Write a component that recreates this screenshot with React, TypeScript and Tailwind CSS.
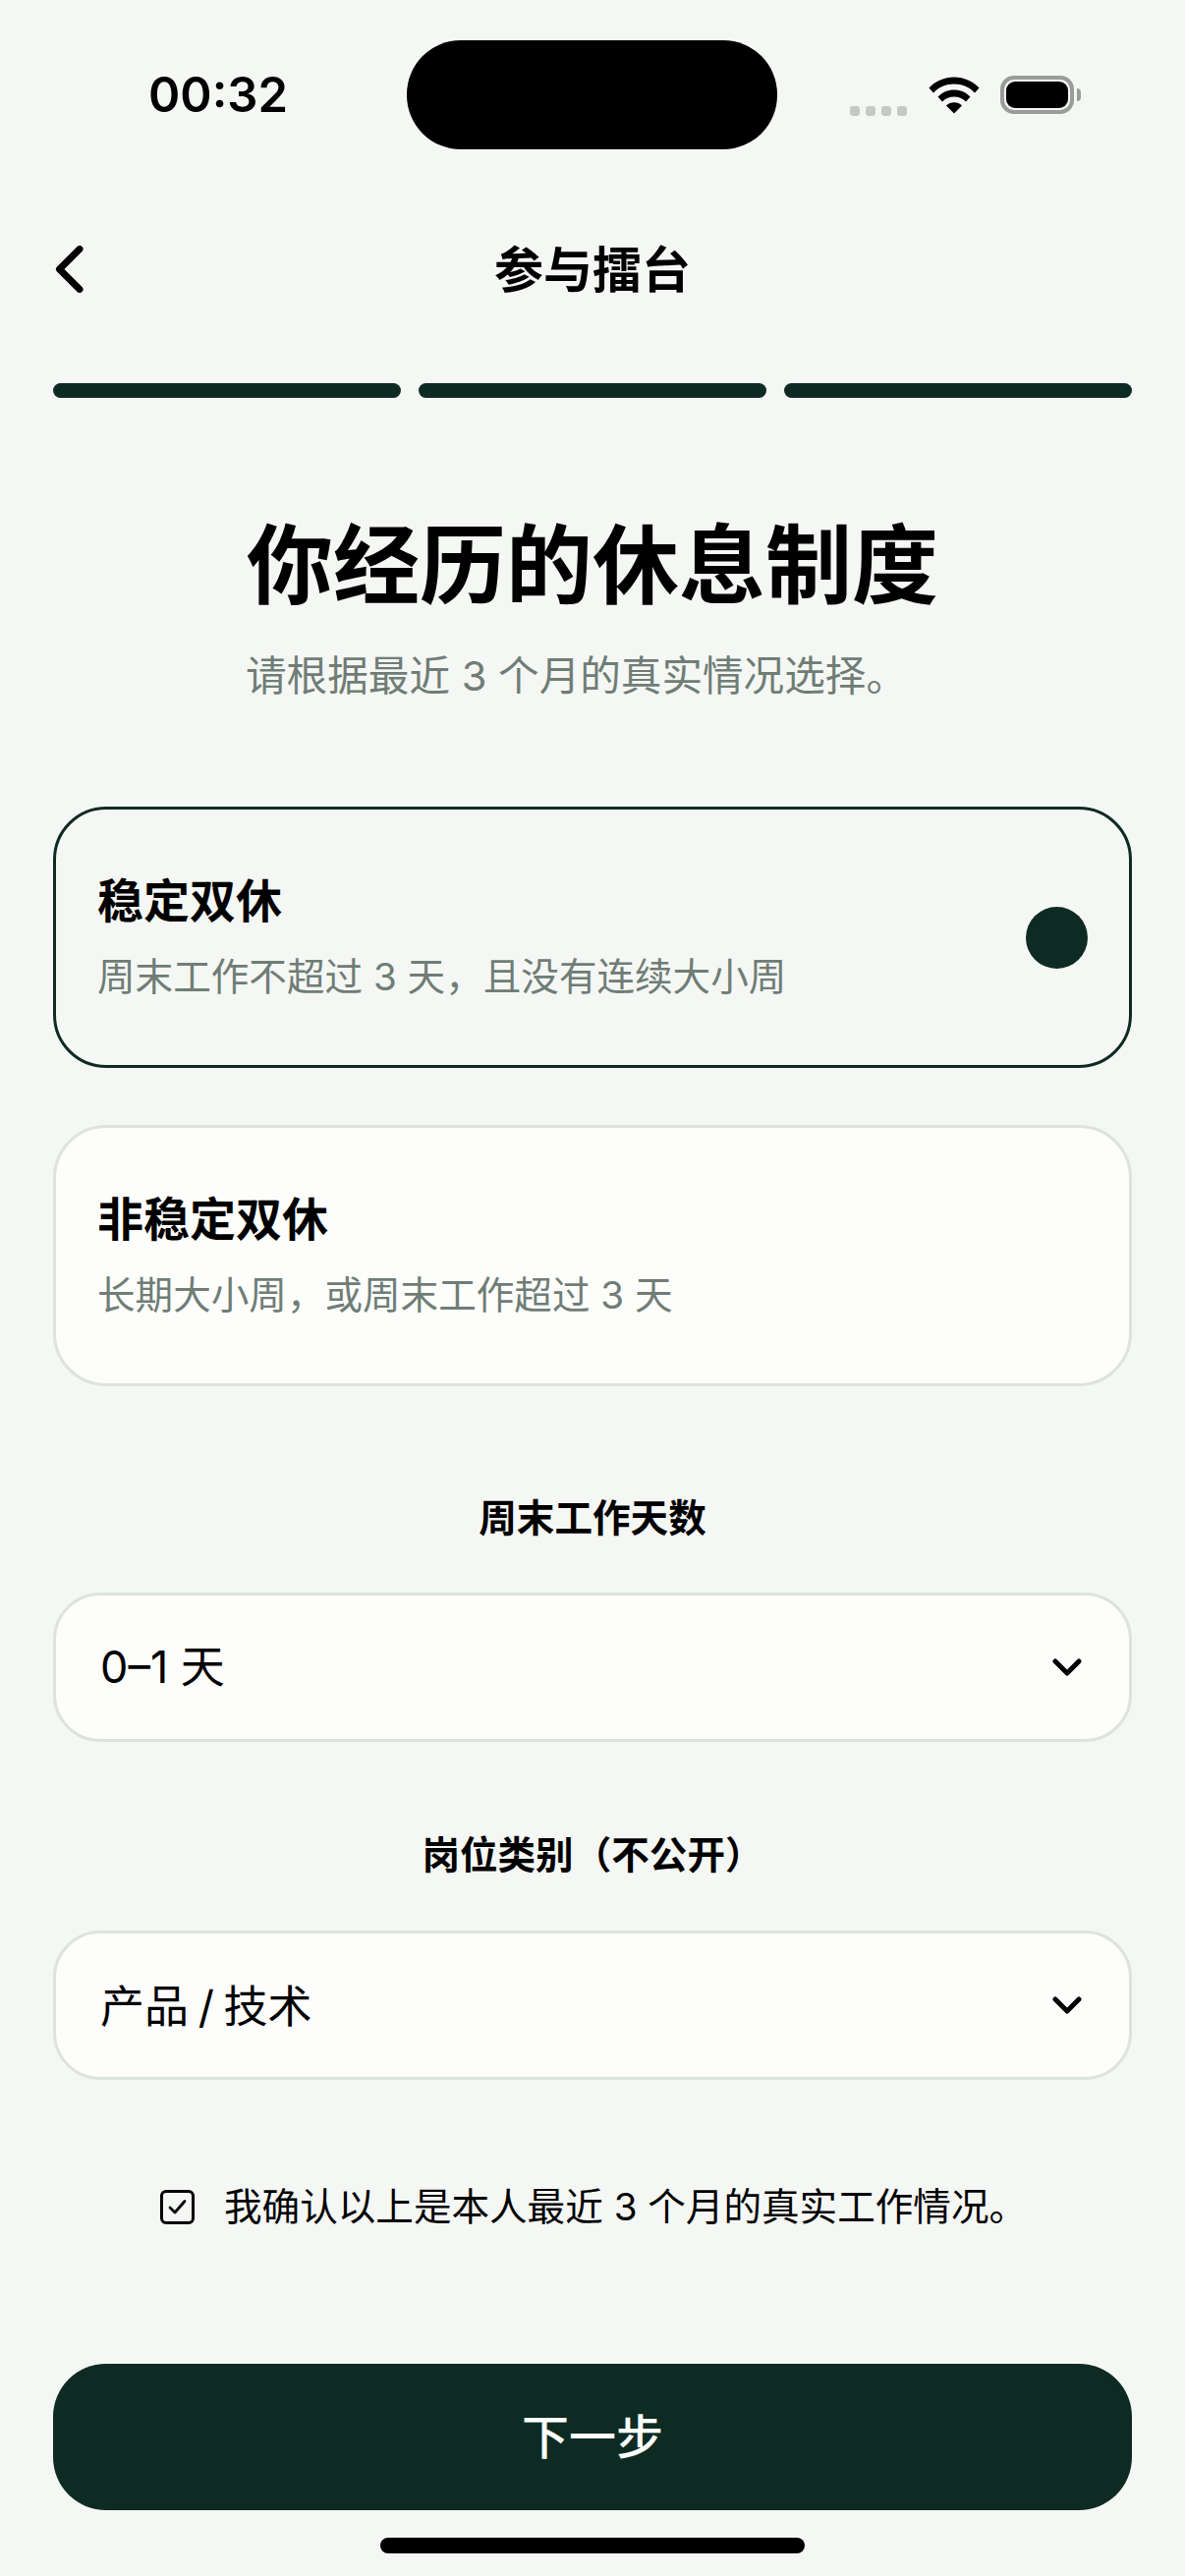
import React from "react";

function OptionCard({ title, desc, selected }: { title: string; desc: string; selected?: boolean }) {
  return (
    <div
      className={
        selected
          ? "flex h-[266px] items-center justify-between rounded-[54px] border-[3px] border-[#0e2b23] bg-[#f5f7f4] pl-[42px] pr-[42px]"
          : "flex h-[266px] items-center justify-between rounded-[54px] border-[3px] border-[#dde3df] bg-[#fdfdfb] pl-[42px] pr-[42px]"
      }
    >
      <div className="mt-[3px] flex flex-col">
        <div className="h-[60px] text-[47px] leading-[60px] font-bold text-black">{title}</div>
        <div className="mt-[17px] h-[60px] text-[38.6px] leading-[60px] text-[#6f7d76]">{desc}</div>
      </div>
      {selected && <div className="h-[63px] w-[63px] rounded-full bg-[#0e2b23]" />}
    </div>
  );
}

function SelectBox({ value, low }: { value: string; low?: boolean }) {
  return (
    <div className="flex h-[152px] items-center justify-between rounded-[48px] border-[3px] border-[#dde3df] bg-[#fdfdfb] pl-[45px] pr-[48px]">
      <span className={low ? "mt-[4px] text-[45px] leading-[60px] text-black [word-spacing:-3px]" : "text-[45px] leading-[60px] text-black"}>{value}</span>
      <svg width="30" height="20" viewBox="0 0 30 20" fill="none">
        <path d="M3 4l12 12L27 4" stroke="#000" strokeWidth="5" strokeLinecap="round" strokeLinejoin="round" />
      </svg>
    </div>
  );
}

export default function App() {
  return (
    <div className="flex h-[2622px] w-[1206px] flex-col overflow-hidden bg-[#f5f7f4] [font-family:Inter,'Noto_Sans_CJK_SC',sans-serif]">
      <div className="flex items-center pt-[41px]">
        <div className="w-[414px] pl-[151px] text-[49px] leading-[60px] font-semibold text-black">00:32</div>
        <div className="h-[111px] w-[377px] rounded-[55px] bg-black" />
        <div className="flex h-[111px] items-center pl-[74px]">
          <div className="mt-[32px] flex gap-[6px]">
            <div className="h-[10px] w-[10px] rounded-[3px] bg-[#c6c8c6]" />
            <div className="h-[10px] w-[10px] rounded-[3px] bg-[#c6c8c6]" />
            <div className="h-[10px] w-[10px] rounded-[3px] bg-[#c6c8c6]" />
            <div className="h-[10px] w-[10px] rounded-[3px] bg-[#c6c8c6]" />
          </div>
          <svg className="ml-[22px]" width="52" height="38" viewBox="0 0 52 38" fill="#000">
            <path d="M0.5 11.5C7 4.5 16 0.5 26 0.5s19 4 25.5 11l-4.5 5C41.500 10.500 34 7.500 26 7.500S10.500 10.500 5 16.500z" />
            <path d="M9.500 20.500C14 16 19.500 13.500 26 13.500s12 2.500 16.500 7l-4.500 5C34.800 22.300 30.500 20.500 26 20.500s-8.800 1.800-12 5z" />
            <path d="M18 29.500c2.200-2 5-3.200 8-3.200s5.800 1.200 8 3.200L26 37.500z" />
          </svg>
          <div className="ml-[21px] flex items-center">
            <div className="flex h-[39px] w-[75px] items-center justify-center rounded-[14px] border-[4px] border-[#999c99] p-[2px]">
              <div className="h-full w-full rounded-[9px] bg-black" />
            </div>
            <div className="ml-[3px] h-[13px] w-[4px] rounded-r-full bg-[#999c99]" />
          </div>
        </div>
      </div>

      <div className="mt-[91px] grid h-[60px] grid-cols-[1fr_auto_1fr] items-center px-[54px]">
        <svg width="32" height="48" viewBox="0 0 32 48" fill="none">
          <path d="M27 3.500L6.500 24 27 44.500" stroke="#000" strokeWidth="7" strokeLinecap="round" strokeLinejoin="round" />
        </svg>
        <div className="mt-[2px] text-[50px] leading-[60px] font-bold text-black">参与擂台</div>
        <div />
      </div>

      <div className="mt-[87px] flex gap-[18px] px-[54px]">
        <div className="h-[15px] flex-1 rounded-full bg-[#0e2b23]" />
        <div className="h-[15px] flex-1 rounded-full bg-[#0e2b23]" />
        <div className="h-[15px] flex-1 rounded-full bg-[#0e2b23]" />
      </div>

      <h1 className="mt-[120px] h-[100px] text-center text-[88px] leading-[100px] font-bold text-black">你经历的休息制度</h1>
      <p className="mt-[33px] h-[60px] pl-[250px] text-[41.6px] leading-[60px] text-[#6f7d76]">请根据最近 3 个月的真实情况选择。</p>

      <div className="mt-[103px] flex flex-col gap-[58px] px-[54px]">
        <OptionCard selected title="稳定双休" desc="周末工作不超过 3 天，且没有连续大小周" />
        <OptionCard title="非稳定双休" desc="长期大小周，或周末工作超过 3 天" />
      </div>

      <div className="mt-[109px] h-[50px] text-center text-[38.6px] leading-[50px] font-semibold text-black">周末工作天数</div>
      <div className="mt-[51px] px-[54px]">
        <SelectBox value="0–1 天" />
      </div>

      <div className="mt-[90px] h-[50px] text-center text-[38.6px] leading-[50px] font-semibold text-black">岗位类别（不公开）</div>
      <div className="mt-[52px] px-[54px]">
        <SelectBox low value="产品 / 技术" />
      </div>

      <div className="mt-[104px] flex h-[50px] items-center pl-[163px]">
        <div className="flex h-[35px] w-[35px] items-center justify-center rounded-[6px] border-[3px] border-black">
          <svg width="21" height="17" viewBox="0 0 21 17" fill="none">
            <path d="M3 9l5 5L18 2.500" stroke="#000" strokeWidth="2.800" strokeLinecap="round" strokeLinejoin="round" />
          </svg>
        </div>
        <span className="ml-[30px] text-[38.6px] leading-[50px] text-black">我确认以上是本人最近 3 个月的真实工作情况。</span>
      </div>

      <div className="mx-[54px] mt-[135px] flex h-[149px] items-center justify-center rounded-[54px] bg-[#0e2b23] text-[48px] font-medium text-white">
        下一步
      </div>

      <div className="mx-auto mt-[28px] h-[16px] w-[432px] rounded-full bg-black" />
    </div>
  );
}
